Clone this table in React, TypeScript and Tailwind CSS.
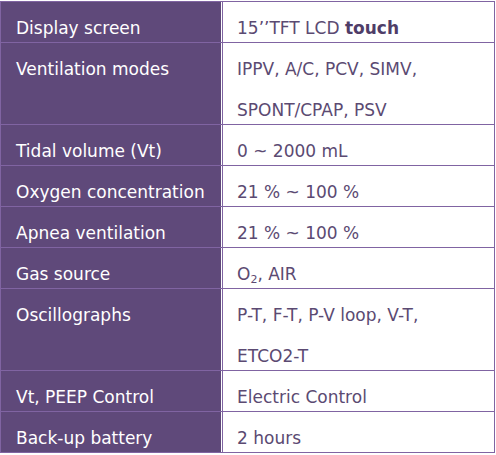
import type { ReactNode } from 'react';

type Row = { label: string; value: ReactNode[] };

const rows: Row[] = [
  {
    label: 'Display screen',
    value: [
      <>
        15’’TFT LCD <span className="font-bold text-[#4f3d68]">touch</span>
      </>,
    ],
  },
  { label: 'Ventilation modes', value: ['IPPV, A/C, PCV, SIMV,', 'SPONT/CPAP, PSV'] },
  { label: 'Tidal volume (Vt)', value: ['0 ~ 2000 mL'] },
  { label: 'Oxygen concentration', value: ['21 % ~ 100 %'] },
  { label: 'Apnea ventilation', value: ['21 % ~ 100 %'] },
  {
    label: 'Gas source',
    value: [
      <>
        O<sub className="text-[11px] align-baseline relative top-[3px]">2</sub>, AIR
      </>,
    ],
  },
  { label: 'Oscillographs', value: ['P-T, F-T, P-V loop, V-T,', 'ETCO2-T'] },
  { label: 'Vt, PEEP Control', value: ['Electric Control'] },
  { label: 'Back-up battery', value: ['2 hours'] },
];

export default function App() {
  return (
    <div className="w-[496px] h-[455px] bg-white pt-px font-['DejaVu_Sans',sans-serif] text-[17px]">
      <div className="w-[495px] border border-[#8064a2]">
        {rows.map((row, i) => (
          <div key={row.label} className={`flex ${i > 0 ? 'border-t border-[#8064a2]' : ''}`}>
            <div className="w-[221px] shrink-0 bg-[#5f497a] border-r border-white pl-[15px] text-white">
              <div className="pt-[12px] leading-[28px]">{row.label}</div>
            </div>
            <div className="flex-1 border-l border-[#8064a2] pl-[14px] text-[#5b4a72]">
              {row.value.map((line, j) => (
                <div key={j} className={`${j > 0 ? 'pt-[13px]' : 'pt-[12px]'} leading-[28px]`}>
                  {line}
                </div>
              ))}
            </div>
          </div>
        ))}
      </div>
    </div>
  );
}
